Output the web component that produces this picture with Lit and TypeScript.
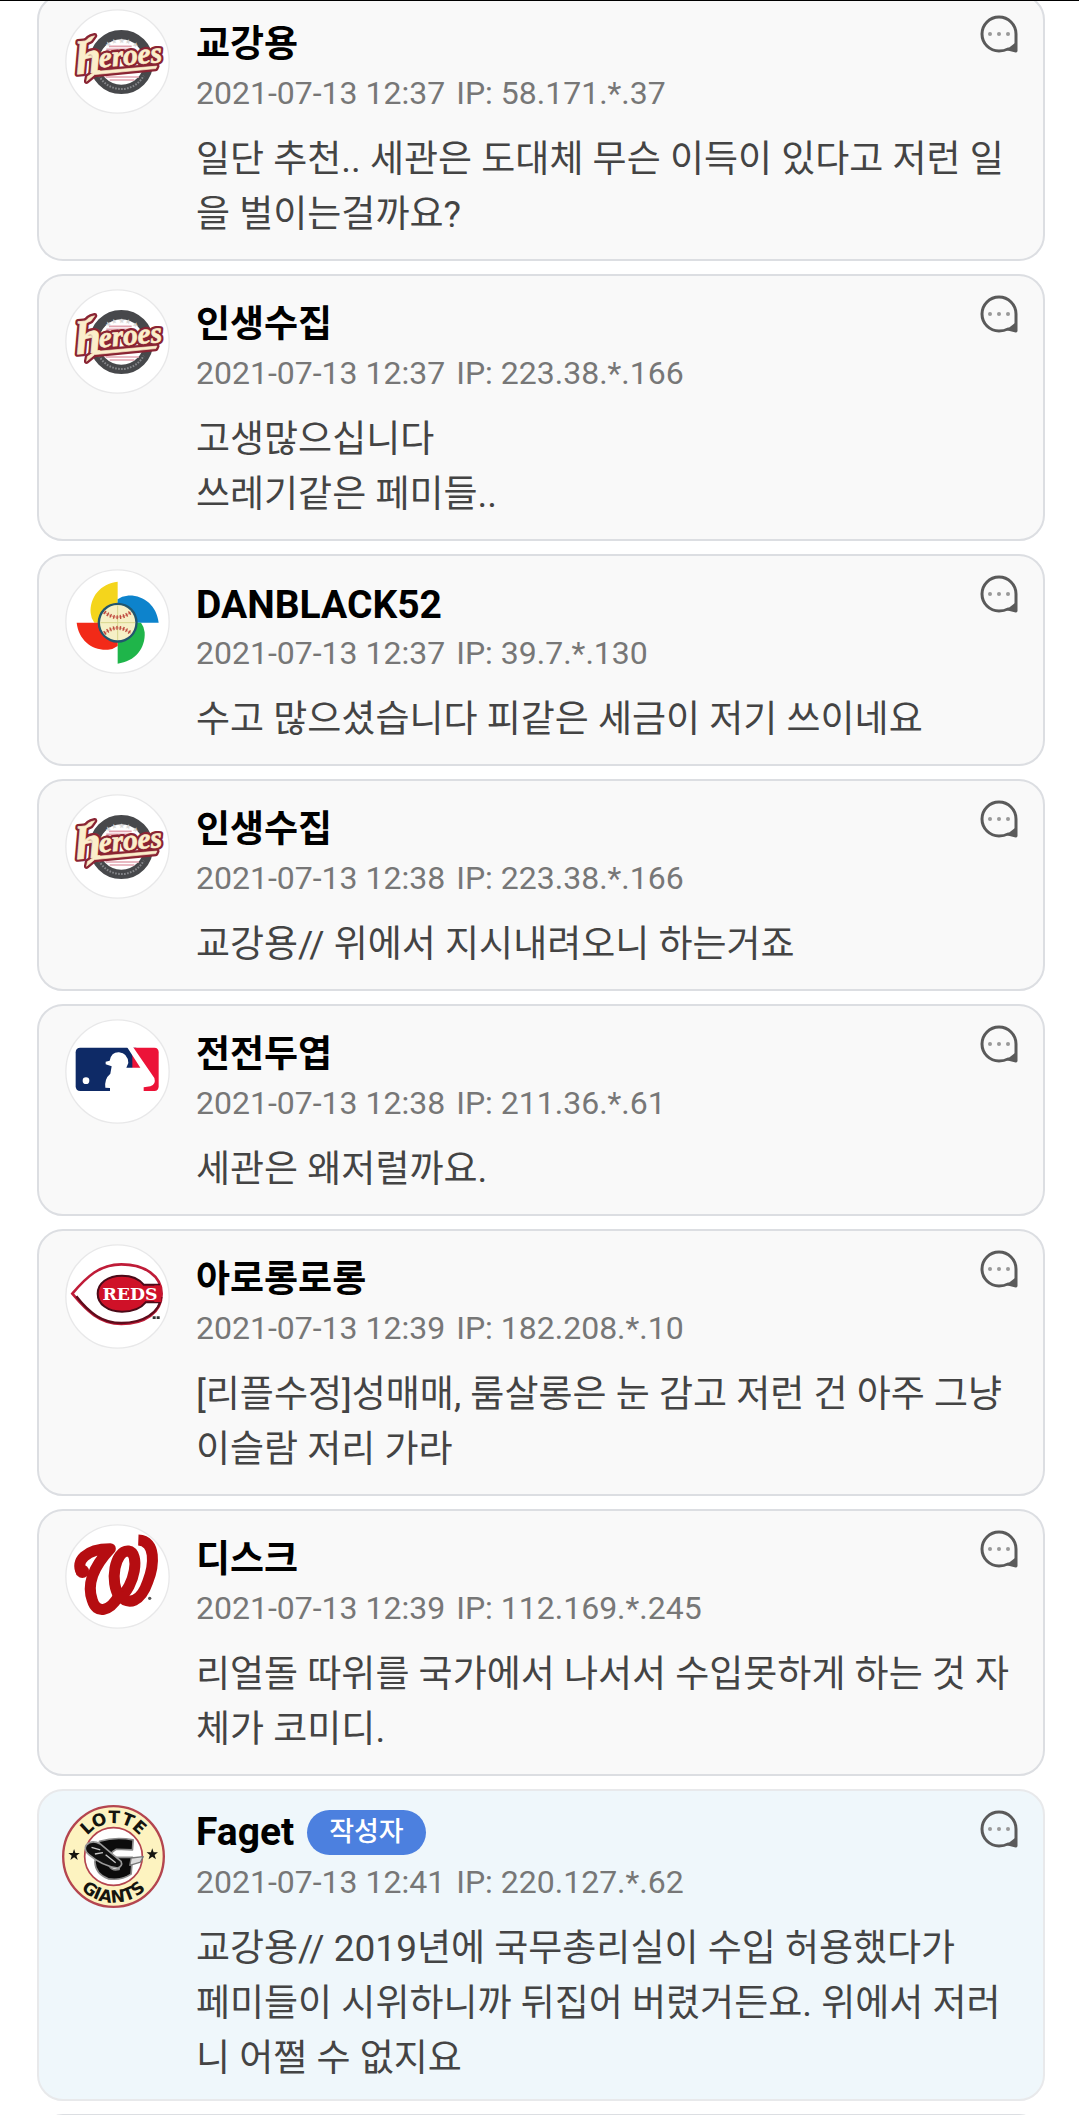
import { LitElement, html, css, svg, nothing } from "lit";
import { customElement, property } from "lit/decorators.js";

type Team = "heroes" | "wbc" | "mlb" | "reds" | "nationals" | "giants";

interface Comment {
  team: Team;
  name: string;
  time: string;
  ip: string;
  lines: string[];
  author?: boolean;
}

const COMMENTS: Comment[] = [
  { team: "heroes", name: "교강용", time: "2021-07-13 12:37", ip: "58.171.*.37", lines: ["일단 추천.. 세관은 도대체 무슨 이득이 있다고 저런 일을 벌이는걸까요?"] },
  { team: "heroes", name: "인생수집", time: "2021-07-13 12:37", ip: "223.38.*.166", lines: ["고생많으십니다", "쓰레기같은 페미들.."] },
  { team: "wbc", name: "DANBLACK52", time: "2021-07-13 12:37", ip: "39.7.*.130", lines: ["수고 많으셨습니다 피같은 세금이 저기 쓰이네요"] },
  { team: "heroes", name: "인생수집", time: "2021-07-13 12:38", ip: "223.38.*.166", lines: ["교강용// 위에서 지시내려오니 하는거죠"] },
  { team: "mlb", name: "전전두엽", time: "2021-07-13 12:38", ip: "211.36.*.61", lines: ["세관은 왜저럴까요."] },
  { team: "reds", name: "아로롱로롱", time: "2021-07-13 12:39", ip: "182.208.*.10", lines: ["[리플수정]성매매, 룸살롱은 눈 감고 저런 건 아주 그냥 이슬람 저리 가라"] },
  { team: "nationals", name: "디스크", time: "2021-07-13 12:39", ip: "112.169.*.245", lines: ["리얼돌 따위를 국가에서 나서서 수입못하게 하는 것 자체가 코미디."] },
  { team: "giants", name: "Faget", time: "2021-07-13 12:41", ip: "220.127.*.62", author: true, lines: ["교강용// 2019년에 국무총리실이 수입 허용했다가", "페미들이 시위하니까 뒤집어 버렸거든요. 위에서 저러니 어쩔 수 없지요"] },
];

const BLADE = "M174 64 V187 H104 Q94 174 93 158 C90 110 122 70 174 64Z";
const STAR = "M0 -17 L4 -5 H17 L7 3 L11 16 L0 8 L-11 16 L-7 3 L-17 -5 H-4Z";
const SWASH = "M80 206 L104 193 H290 L286 200 L102 202 L76 220Z M62 152 L72 144 H98 V150 L62 154Z M78 108 Q88 88 112 86 L100 100Z";

const disc = svg`<circle cx="173.5" cy="183.5" r="155" fill="#fff" stroke="#e8e8e9" stroke-width="4"/>`;

const LOGOS: Record<Team, unknown> = {
  heroes: svg`${disc}
    <g transform="translate(0 14)">
      <circle cx="185" cy="171" r="82" fill="#fff" stroke="#47484b" stroke-width="28"/>
      <path id="crest" d="M112 171 A75 75 0 0 1 258 171" fill="none"/>
      <text font-family="Roboto, sans-serif" font-weight="700" font-size="18" fill="#d8d8d8" text-anchor="middle"><textPath href="#crest" startOffset="50%">★ ★ ★ ★ ★</textPath></text>
      <path d="M118 212 A76 76 0 0 0 252 212" fill="none" stroke="#85868a" stroke-width="6" stroke-dasharray="5 4"/>
      <path d="M140 133 H225 M148 124 H216 M138 216 H238 M150 225 H224" stroke="#e2a4b0" stroke-width="5"/>
      <g transform="rotate(-5 180 170)" font-family="Liberation Serif, serif" font-weight="700" font-style="italic" stroke-linejoin="round">
        <g fill="#8a2433" stroke="#8a2433" stroke-width="16">
          <text x="48" y="196" font-size="140">h</text>
          <text x="118" y="182" font-size="88">eroes</text>
          <path d=${SWASH}/>
        </g>
        <g fill="#fbeecb" stroke="#fbeecb" stroke-width="2">
          <text x="48" y="196" font-size="140">h</text>
          <text x="118" y="182" font-size="88">eroes</text>
          <path d=${SWASH}/>
        </g>
      </g>
    </g>`,
  wbc: svg`${disc}
    <path d=${BLADE} fill="#f4d51c"/>
    <path d=${BLADE} fill="#0d83cc" transform="rotate(90 174 187)"/>
    <path d=${BLADE} fill="#1fb54a" transform="rotate(180 174 187)"/>
    <path d=${BLADE} fill="#f22a18" transform="rotate(270 174 187)"/>
    <circle cx="174" cy="187" r="60" fill="#21566e"/>
    <circle cx="174" cy="187" r="53" fill="#f6f0c6"/>
    <path d="M122 187 H226 M174 135 V239" stroke="#d7d58e" stroke-width="3"/>
    <path d="M134 155 Q174 186 214 155 M134 219 Q174 186 214 219" fill="none" stroke="#e3a48f" stroke-width="4"/>
    <path d="M134 155 Q174 186 214 155 M134 219 Q174 186 214 219" fill="none" stroke="#bd4a3c" stroke-width="12" stroke-dasharray="4 6"/>`,
  mlb: svg`${disc}
    <path d="M62 112 H230 V242 H62 Q48 242 48 228 V126 Q48 112 62 112Z" fill="#0e2a66"/>
    <path d="M218 112 H284 Q297 112 297 126 V228 Q297 242 284 242 H218Z" fill="#ec1338"/>
    <path d="M202 110 H220 L284 203 Q290 222 272 228 L252 231 V245 H151 V233 L137 232 Q134 205 152 190 L156 168 L138 162 V154 L150 151 Q155 125 178 126 Q204 128 206 158 L200 172 H242Z" fill="#fff"/>
    <circle cx="79" cy="211" r="10" fill="#fff"/>`,
  reds: svg`${disc}
    <path d="M38 175 C80 125 120 87 185 87 C255 87 306 122 306 175 C306 232 255 266 185 266 C120 266 80 225 38 175Z" fill="#fff" stroke="#bf1c38" stroke-width="8"/>
    <path d="M50 183 C90 235 130 263 185 263 C250 263 300 232 305 185" fill="none" stroke="#5e0c1c" stroke-width="7"/>
    <path d="M298 148 H252 C238 130 216 121 187 121 C144 121 114 144 114 175 C114 206 144 229 187 229 C222 229 246 216 258 201 H298Z" fill="#cf1128" stroke="#4a0a18" stroke-width="6"/>
    <path d="M284 150 H305 V200 H284Z" fill="#cf1128"/>
    <text x="211" y="194" text-anchor="middle" font-family="DejaVu Serif, serif" font-weight="700" font-size="52" fill="#fff">REDS</text>
    <path d="M279 247 H300" stroke="#333" stroke-width="8" stroke-dasharray="9 3"/>`,
  nationals: svg`${disc}
    <g fill="none" stroke="#b50d11" stroke-width="33" stroke-linejoin="round">
      <path d="M66 172 C46 138 78 100 152 100 C105 150 80 205 98 255 C110 297 150 290 178 240"/>
      <path d="M180 246 C148 200 166 104 206 107 C242 112 226 214 180 246Z"/>
      <path d="M236 74 C290 76 284 150 264 200 C244 258 208 274 176 238"/>
    </g>
    <circle cx="68" cy="168" r="20" fill="#b50d11"/>
    <circle cx="270" cy="249" r="5" fill="#555"/>`,
  giants: svg`
    <circle cx="173.5" cy="183.5" r="150" fill="#fdf3c0" stroke="#b4454f" stroke-width="7"/>
    <circle cx="173.5" cy="183.5" r="86" fill="#fff" stroke="#b4454f" stroke-width="5"/>
    <path id="upper" d="M74 183.5 A99.5 99.5 0 0 1 273 183.5" fill="none"/>
    <path id="lower" d="M36 183.5 A137.5 137.5 0 0 0 311 183.5" fill="none"/>
    <g font-family="DejaVu Sans, sans-serif" font-weight="700" font-size="51" fill="#15150f" text-anchor="middle">
      <text><textPath href="#upper" startOffset="50%">LOTTE</textPath></text>
      <text><textPath href="#lower" startOffset="50%">GIANTS</textPath></text>
    </g>
    <path d=${STAR} transform="translate(56 178)" fill="#15150f"/>
    <path d=${STAR} transform="translate(289 176)" fill="#15150f"/>
    <g stroke-linejoin="round">
      <path d="M132 138 Q180 124 232 134 L230 164 L182 162 Q156 174 160 206 Q164 228 190 222 L192 206 L176 204 V186 H230 L226 236 Q196 256 158 250 Q120 236 118 200Z" fill="#0c0c0c" stroke="#8a8a8a" stroke-width="5"/>
      <path d="M92 150 Q108 132 134 146 L196 198 Q202 212 186 218 Q140 212 100 178 Q84 164 92 150Z" fill="#111" stroke="#9a9a9a" stroke-width="5"/>
      <path d="M108 156 L134 164 M118 176 L142 172 M150 178 L180 202" stroke="#c8c8c8" stroke-width="4"/>
      <path d="M226 188 L262 184 L254 200 L222 210Z" fill="#ddd" stroke="#777" stroke-width="4"/>
    </g>`,
};

@customElement("comment-card")
class CommentCard extends LitElement {
  @property({ attribute: false }) comment!: Comment;

  static styles = css`
    :host {
      display: block;
    }
    .card {
      display: flex;
      align-items: flex-start;
      box-sizing: border-box;
      padding: 13px 25px 17px 26px;
      border: 2px solid #dcdee2;
      border-radius: 26px;
      background: #f9f9f9;
    }
    .card.author {
      padding: 14px 25px 13px 23px;
      border-color: #e8e9eb;
      background: #eff7fb;
    }
    .avatar {
      flex: none;
      width: 105px;
      height: 105px;
      margin-right: 26px;
    }
    .author .avatar {
      width: 103px;
      height: 103px;
      margin-right: 31px;
    }
    .main {
      flex: 1;
      min-width: 0;
      padding-top: 10px;
    }
    .author .main {
      padding-top: 2px;
    }
    .top {
      display: flex;
      align-items: center;
      gap: 13px;
      height: 52px;
    }
    .name {
      margin: 0;
      font-size: 37px;
      line-height: 52px;
      font-weight: 700;
      color: #000;
    }
    .name.latin {
      font-size: 39px;
      line-height: 50px;
    }
    .badge {
      padding: 0 22px;
      border-radius: 23px;
      background: #4c80df;
      color: #fff;
      font-size: 27px;
      line-height: 45px;
      font-weight: 500;
    }
    .author .top {
      height: 50px;
    }
    .meta {
      display: flex;
      gap: 11px;
      margin: 0 0 17px;
      font-size: 32px;
      line-height: 44px;
      color: #777;
    }
    .author .meta {
      margin-top: 3px;
    }
    .text {
      margin: 0;
      font-size: 37px;
      line-height: 55px;
      color: #444;
      word-break: break-all;
    }
    .body {
      margin-right: -8px;
    }
    .reply {
      flex: none;
      order: 2;
      width: 38px;
      height: 38px;
      margin: 6px 0 0 -38px;
      padding: 0;
      border: 0;
      background: none;
      cursor: pointer;
    }
    .author .reply {
      margin-top: 5px;
    }
    .reply svg {
      display: block;
      width: 38px;
      height: 38px;
    }
  `;

  render() {
    const c = this.comment;
    const latin = /^[\x20-\x7e]+$/.test(c.name);
    return html`
      <article class="card ${c.author ? "author" : ""}">
        <svg class="avatar" viewBox=${c.author ? "20 30 307 307" : "16 26 315 315"} aria-hidden="true">${LOGOS[c.team]}</svg>
        <div class="main">
          <header class="top">
            <h2 class="name ${latin ? "latin" : ""}">${c.name}</h2>
            ${c.author ? html`<span class="badge">작성자</span>` : nothing}
          </header>
          <div class="meta"><time>${c.time}</time><span>IP: ${c.ip}</span></div>
          <div class="body">${c.lines.map((l) => html`<p class="text">${l}</p>`)}</div>
        </div>
        <button class="reply" type="button" aria-label="답글">
          <svg viewBox="0 0 38 38" aria-hidden="true">
            <path d="M36 36 V19 A17 17 0 1 0 19 36 Q24 36 28 34 Z" fill="none" stroke="#5a5a5a" stroke-width="3" stroke-linejoin="round"/>
            <path d="M26 35 L35 28 V36Z" fill="#5a5a5a"/>
            <g fill="#999"><circle cx="10" cy="19" r="2"/><circle cx="19" cy="19" r="2"/><circle cx="28" cy="19" r="2"/></g>
          </svg>
        </button>
      </article>
    `;
  }
}

@customElement("app-root")
class AppRoot extends LitElement {
  static styles = css`
    :host {
      display: block;
      overflow: hidden;
      border-top: 1px solid #000;
      background: #fff;
      font-family: Roboto, "Noto Sans CJK KR", sans-serif;
    }
    .list {
      display: flex;
      flex-direction: column;
      gap: 13px;
      margin: -7px 34px 0 37px;
    }
    .next {
      height: 2px;
      overflow: hidden;
    }
    .edge {
      height: 60px;
      box-sizing: border-box;
      border: 2px solid #dcdee2;
      border-radius: 26px;
      background: #f9f9f9;
    }
  `;

  render() {
    return html`
      <main class="list">
        ${COMMENTS.map((c) => html`<comment-card .comment=${c}></comment-card>`)}
        <div class="next"><div class="edge"></div></div>
      </main>
    `;
  }
}
